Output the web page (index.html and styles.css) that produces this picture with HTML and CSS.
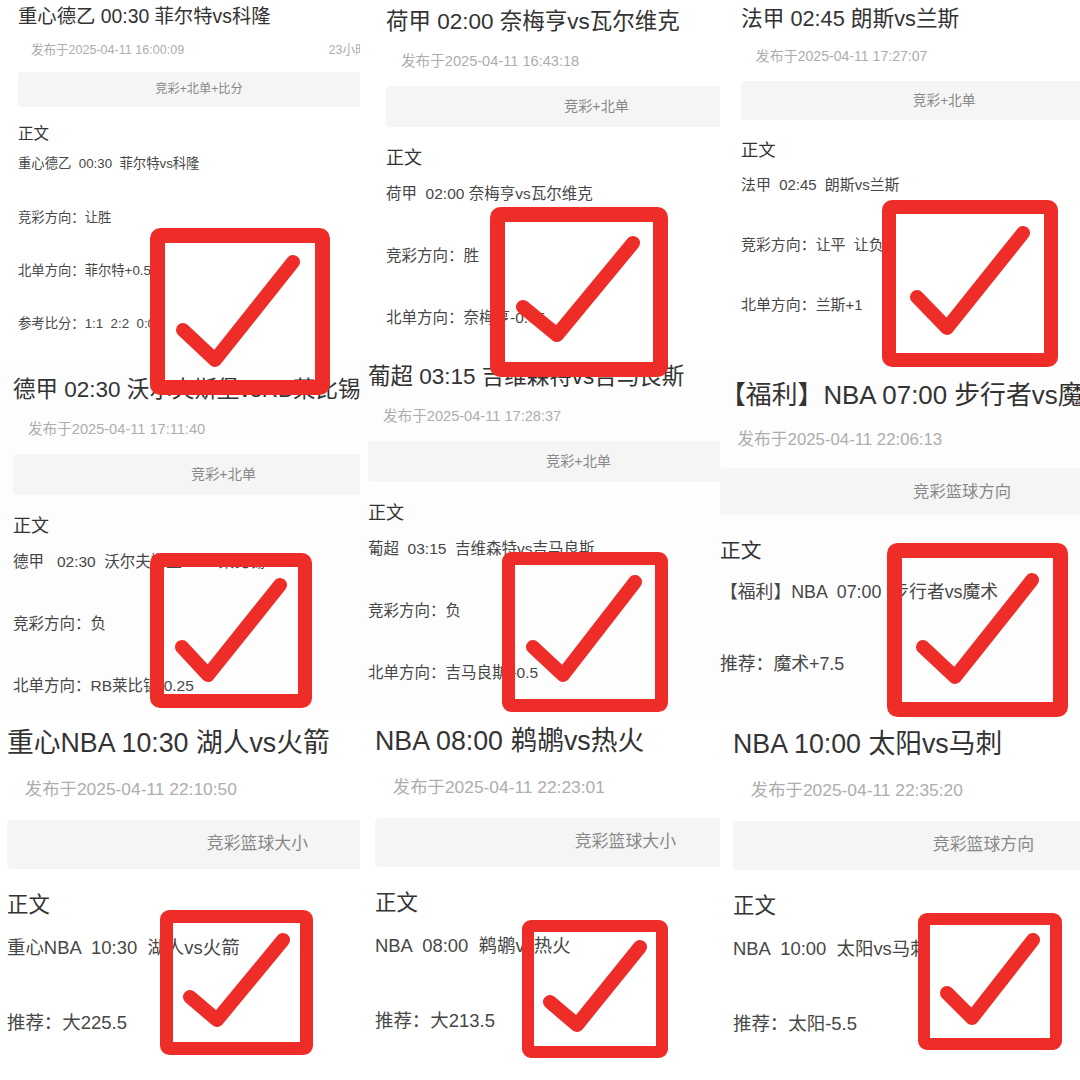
FILE: index.html
```html
<!DOCTYPE html>
<html>
<head>
	<meta charset="utf-8">
	<title>推荐合集</title>
	<link rel="stylesheet" href="styles.css">
</head>
<body>
	<main class="board">
		<section class="shot s1">
			<div class="post">
				<div class="title">重心德乙 00:30 菲尔特vs科隆</div>
				<div class="meta"><span>发布于2025-04-11 16:00:09</span><span>23小时前</span></div>
				<div class="tag">竞彩+北单+比分</div>
				<div class="label">正文</div>
				<div class="text">
					<p>重心德乙  00:30  菲尔特vs科隆</p>
					<p>竞彩方向：让胜</p>
					<p>北单方向：菲尔特+0.5</p>
					<p>参考比分：1:1  2:2  0:0</p>
				</div>
			</div>
		</section>
		<section class="shot s2">
			<div class="post">
				<div class="title">荷甲 02:00 奈梅亨vs瓦尔维克</div>
				<div class="meta"><span>发布于2025-04-11 16:43:18</span></div>
				<div class="tag">竞彩+北单</div>
				<div class="label">正文</div>
				<div class="text">
					<p>荷甲  02:00 奈梅亨vs瓦尔维克</p>
					<p>竞彩方向：胜</p>
					<p>北单方向：奈梅亨-0.75</p>
				</div>
			</div>
		</section>
		<section class="shot s3">
			<div class="post">
				<div class="title">法甲 02:45 朗斯vs兰斯</div>
				<div class="meta"><span>发布于2025-04-11 17:27:07</span></div>
				<div class="tag">竞彩+北单</div>
				<div class="label">正文</div>
				<div class="text">
					<p>法甲  02:45  朗斯vs兰斯</p>
					<p>竞彩方向：让平  让负</p>
					<p>北单方向：兰斯+1</p>
				</div>
			</div>
		</section>
		<section class="shot s4">
			<div class="post">
				<div class="title">德甲 02:30 沃尔夫斯堡vsRB莱比锡</div>
				<div class="meta"><span>发布于2025-04-11 17:11:40</span></div>
				<div class="tag">竞彩+北单</div>
				<div class="label">正文</div>
				<div class="text">
					<p>德甲   02:30  沃尔夫斯堡vsRB莱比锡</p>
					<p>竞彩方向：负</p>
					<p>北单方向：RB莱比锡-0.25</p>
				</div>
			</div>
		</section>
		<section class="shot s5">
			<div class="post">
				<div class="title">葡超 03:15 吉维森特vs吉马良斯</div>
				<div class="meta"><span>发布于2025-04-11 17:28:37</span></div>
				<div class="tag">竞彩+北单</div>
				<div class="label">正文</div>
				<div class="text">
					<p>葡超  03:15  吉维森特vs吉马良斯</p>
					<p>竞彩方向：负</p>
					<p>北单方向：吉马良斯+0.5</p>
				</div>
			</div>
		</section>
		<section class="shot s6">
			<div class="post">
				<div class="title">【福利】NBA 07:00 步行者vs魔术</div>
				<div class="meta"><span>发布于2025-04-11 22:06:13</span></div>
				<div class="tag">竞彩篮球方向</div>
				<div class="label">正文</div>
				<div class="text wide">
					<p>【福利】NBA  07:00  步行者vs魔术</p>
					<p>推荐：魔术+7.5</p>
				</div>
			</div>
		</section>
		<section class="shot s7">
			<div class="post">
				<div class="title">重心NBA 10:30 湖人vs火箭</div>
				<div class="meta"><span>发布于2025-04-11 22:10:50</span></div>
				<div class="tag">竞彩篮球大小</div>
				<div class="label">正文</div>
				<div class="text wide">
					<p>重心NBA  10:30  湖人vs火箭</p>
					<p>推荐：大225.5</p>
				</div>
			</div>
		</section>
		<section class="shot s8">
			<div class="post">
				<div class="title">NBA 08:00 鹈鹕vs热火</div>
				<div class="meta"><span>发布于2025-04-11 22:23:01</span></div>
				<div class="tag">竞彩篮球大小</div>
				<div class="label">正文</div>
				<div class="text wide">
					<p>NBA  08:00  鹈鹕vs热火</p>
					<p>推荐：大213.5</p>
				</div>
				<div class="bar"></div>
			</div>
		</section>
		<section class="shot s9">
			<div class="post">
				<div class="title">NBA 10:00 太阳vs马刺</div>
				<div class="meta"><span>发布于2025-04-11 22:35:20</span></div>
				<div class="tag">竞彩篮球方向</div>
				<div class="label">正文</div>
				<div class="text wide">
					<p>NBA  10:00  太阳vs马刺</p>
					<p>推荐：太阳-5.5</p>
				</div>
			</div>
		</section>

		<!-- hand drawn ticks laid over the screenshots -->
		<svg class="marks" width="1080" height="1080" viewBox="0 0 1080 1080">
			<g class="box">
				<rect x="157.5" y="235.5" width="165" height="152" stroke-width="15"/>
				<rect x="497.5" y="214.5" width="163" height="155" stroke-width="15"/>
				<rect x="889" y="207" width="162" height="153" stroke-width="14"/>
				<rect x="157" y="560" width="148" height="141" stroke-width="14"/>
				<rect x="508.5" y="558.5" width="153" height="147" stroke-width="13"/>
				<rect x="894.5" y="550.5" width="166" height="159" stroke-width="15"/>
				<rect x="166.5" y="916.5" width="140" height="132" stroke-width="13"/>
				<rect x="528" y="926" width="134" height="126" stroke-width="12"/>
				<rect x="924" y="919" width="132" height="125" stroke-width="12"/>
			</g>
			<g class="tick">
				<polyline points="183,330 215,360 293,262"/>
				<polyline points="523,307 557,335 633,243"/>
				<polyline points="917,297 947,328 1023,233"/>
				<polyline points="182,647 208,675 280,585"/>
				<polyline points="533,647 563,675 635,582"/>
				<polyline points="923,647 955,677 1032,580"/>
				<polyline points="190,997 217,1020 283,940"/>
				<polyline points="550,1002 577,1025 640,947"/>
				<polyline points="947,993 972,1018 1033,940"/>
			</g>
		</svg>
	</main>
</body>
</html>
```

FILE: styles.css
```css
body{margin: 0;background-color: #fff;font-family: "Liberation Sans", "Noto Sans CJK SC", sans-serif;}
.board{position: relative;width: 1080px;height: 1080px;display: grid;grid-template-columns: repeat(3, 360px);grid-template-rows: repeat(3, 360px);overflow: hidden;}
.shot{overflow: hidden;background-color: #fff;box-sizing: border-box;}
.post{width: 421px;}

.title{font-size: 22.5px;line-height: 30px;color: #333;white-space: pre;}
.meta{display: flex;justify-content: space-between;margin: 14px 0 0 15px;font-size: 14.6px;line-height: 20px;color: #adadad;white-space: pre;}
.tag{margin-top: 15px;height: 41px;line-height: 41px;background-color: #f5f5f5;border-radius: 4px;text-align: center;font-size: 14.2px;color: #888;}
.label{margin-top: 18px;font-size: 18px;line-height: 26px;color: #333;}
.text p{margin: 38px 0 0;font-size: 15.5px;line-height: 24px;color: #474747;white-space: pre;}
.text p:first-child{margin-top: 11px;}
.text.wide p{margin-top: 39px;}
.text.wide p:first-child{margin-top: 11px;}
.bar{margin: 40px 0 0 17px;height: 2px;background-color: #dcc4a2;}

/* each screenshot was taken at its own scale */
.s1{padding: 4px 0 0 18px;}
.s1 .post{zoom: 0.86;}
.s2{padding: 7px 0 0 26px;}
.s3{padding: 4.5px 0 0 21px;}
.s3 .post{zoom: 0.965;}
.s4{padding: 15px 0 0 13px;background-color: #fdfdfd;}
.s5{padding: 2px 0 0 8px;background-color: #fdfdfd;}
.s6{padding: 17.5px 0 0 0;background-color: #fdfdfd;}
.s6 .post{zoom: 1.15;}
.s7{padding: 6px 0 0 7px;}
.s8{padding: 4px 0 0 15px;}
.s9{padding: 7px 0 0 13px;}
.s7 .post, .s8 .post, .s9 .post{zoom: 1.19;}

.marks{position: absolute;left: 0;top: 0;pointer-events: none;}
.box rect{fill: none;stroke: #ee2c28;stroke-linejoin: round;rx: 3px;}
.tick polyline{fill: none;stroke: #ee2c28;stroke-width: 14;stroke-linecap: round;stroke-linejoin: round;}
```
